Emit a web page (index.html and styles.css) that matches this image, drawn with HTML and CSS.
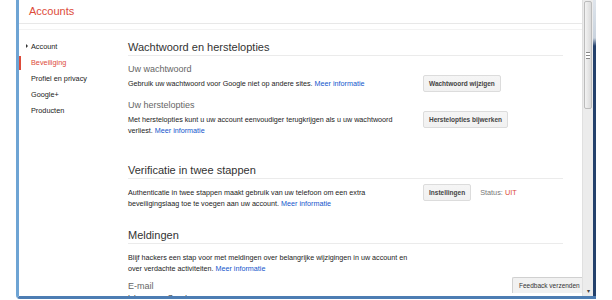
FILE: index.html
```html
<!DOCTYPE html>
<html lang="nl">
<head>
  <meta charset="UTF-8">
  <title>Accounts</title>
  <link rel="stylesheet" href="styles.css">
</head>
<body>
<div class="window">
  <div class="page">
    <div class="header">Accounts</div>
    <div class="content">
      <div class="sidebar">
        <div class="nav-item nav-parent"><span class="arrow"></span>Account</div>
        <div class="nav-item active">Beveiliging</div>
        <div class="nav-item">Profiel en privacy</div>
        <div class="nav-item">Google+</div>
        <div class="nav-item">Producten</div>
      </div>
      <div class="main">
        <div class="section section-wide">
          <h2>Wachtwoord en herstelopties</h2>
          <h3>Uw wachtwoord</h3>
          <div class="row">
            <p>Gebruik uw wachtwoord voor Google niet op andere sites. <a href="#">Meer informatie</a></p>
            <div class="actions"><button>Wachtwoord wijzigen</button></div>
          </div>
          <h3 class="sub">Uw herstelopties</h3>
          <div class="row">
            <p>Met herstelopties kunt u uw account eenvoudiger terugkrijgen als u uw wachtwoord<br>verliest. <a href="#">Meer informatie</a></p>
            <div class="actions"><button>Herstelopties bijwerken</button></div>
          </div>
        </div>
        <div class="section">
          <h2>Verificatie in twee stappen</h2>
          <div class="row">
            <p>Authenticatie in twee stappen maakt gebruik van uw telefoon om een extra<br>beveiligingslaag toe te voegen aan uw account. <a href="#">Meer informatie</a></p>
            <div class="actions">
              <button>Instellingen</button>
              <span class="status">Status: <span class="off">UIT</span></span>
            </div>
          </div>
        </div>
        <div class="section section-mid">
          <h2>Meldingen</h2>
          <div class="row">
            <p>Blijf hackers een stap voor met meldingen over belangrijke wijzigingen in uw account en<br>over verdachte activiteiten. <a href="#">Meer informatie</a></p>
          </div>
          <h3 class="last">E-mail</h3>
          <p>Inloggen op Google</p>
        </div>
      </div>
    </div>
    <div class="feedback">Feedback verzenden</div>
  </div>
  <div class="scrollbar">
    <div class="thumb"><span></span></div>
    <div class="down">&#9662;</div>
  </div>
  <div class="frame-edge"></div>
</div>
</body>
</html>
```

FILE: styles.css
```css
body {
  margin: 0;
  background: #fff;
  font-family: "Liberation Sans", Arial, sans-serif;
  color: #222;
  overflow: hidden;
}
.window {
  display: flex;
  margin-left: 16px;
  width: 577px;
  height: 296px;
  border-left: 3px solid #6ea4d4;
  border-bottom: 3px solid #4d7db3;
  border-bottom-left-radius: 4px;
}
.page {
  position: relative;
  flex: 1;
  overflow: hidden;
  background: #fff;
}
.header {
  font-size: 11px;
  line-height: 13px;
  color: #dd4b39;
  padding: 5px 0 5px 10px;
  border-bottom: 1px solid #e8e8e8;
}
.content {
  display: flex;
  margin-top: 5px;
  border-top: 1px solid #f3f3f3;
}
.sidebar {
  width: 109px;
  padding-top: 10px;
}
.nav-item {
  font-size: 7.3px;
  line-height: 14px;
  margin-bottom: 2px;
  padding-left: 10px;
  border-left: 2px solid transparent;
}
.nav-item.active {
  color: #dd4b39;
  border-left-color: #dd4b39;
}
.arrow {
  display: inline-block;
  width: 0;
  height: 0;
  border-top: 2px solid transparent;
  border-bottom: 2px solid transparent;
  border-left: 2px solid #333;
  margin-left: -5px;
  margin-right: 3px;
  vertical-align: 1px;
}
.main {
  width: 435px;
  padding-top: 10px;
}
.section {
  padding-bottom: 19px;
}
.section-wide {
  padding-bottom: 27px;
}
.section-mid h2 + .row {
  margin-top: 4px;
}
h2 {
  margin: 0;
  font-size: 11px;
  font-weight: normal;
  line-height: 14px;
  color: #333;
  padding-bottom: 1px;
  border-bottom: 1px solid #ebebeb;
}
h3 {
  margin: 7px 0 0;
  font-size: 9px;
  font-weight: normal;
  line-height: 12px;
  color: #666;
}
h3.sub {
  margin-top: 7px;
}
h3.last {
  margin-top: 6px;
}
p {
  margin: 0;
  font-size: 7.2px;
  line-height: 11px;
  white-space: nowrap;
}
a {
  color: #15c;
  text-decoration: none;
}
.row {
  display: flex;
  align-items: flex-start;
}
.section > h2 + .row {
  margin-top: 5px;
}
.row p {
  width: 288px;
  padding-top: 3px;
}
.actions {
  display: flex;
  align-items: center;
  margin-left: 7px;
  gap: 9px;
}
button {
  height: 17px;
  padding: 0 5px;
  font-family: "Liberation Sans", Arial, sans-serif;
  font-size: 6.5px;
  font-weight: bold;
  color: #444;
  background: linear-gradient(#f5f5f5, #f1f1f1);
  border: 1px solid #dcdcdc;
  border-radius: 2px;
}
.status {
  font-size: 7.3px;
  color: #777;
}
.off {
  color: #dd4b39;
}
.feedback {
  position: absolute;
  right: 0;
  bottom: 3px;
  width: 63px;
  height: 15px;
  padding-left: 6px;
  font-size: 6.5px;
  line-height: 15px;
  color: #333;
  background: #f1f1f1;
  border: 1px solid #d0d0d0;
  border-right: none;
  border-bottom: none;
  border-top-left-radius: 2px;
}
.scrollbar {
  position: relative;
  width: 10px;
  background: #ececec;
  border-left: 1px solid #e0e0e0;
}
.thumb {
  height: 106px;
  margin: 1px 1px 0;
  background: linear-gradient(to right, #f3f3f3, #dadada);
  border: 1px solid #bcbcbc;
  border-radius: 2px;
  display: flex;
  align-items: center;
  justify-content: center;
}
.thumb span {
  width: 4px;
  height: 5px;
  border-top: 1px solid #888;
  border-bottom: 1px solid #888;
  background: linear-gradient(#fff 0, #fff 40%, #888 40%, #888 60%, #fff 60%);
}
.down {
  position: absolute;
  bottom: 2px;
  left: 0;
  right: 0;
  text-align: center;
  font-size: 6px;
  color: #444;
}
.frame-edge {
  width: 3px;
  background: linear-gradient(#dfe5ec 0, #c9d3de 38px, #24416c 46px, #24416c 100%);
}
```
